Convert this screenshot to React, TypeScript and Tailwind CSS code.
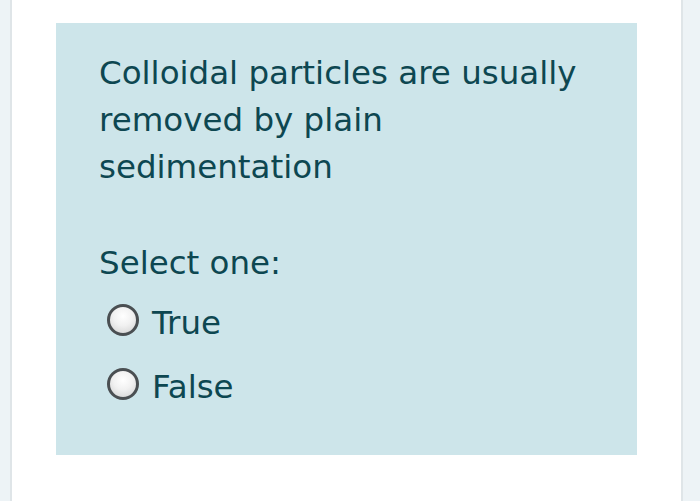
import React from "react";

function Radio({ label }: { label: string }) {
  return (
    <div className="flex items-center gap-[13px] h-[64px]">
      <span className="w-[32px] h-[32px] rounded-full border-[3px] border-[#4a4f52] bg-[radial-gradient(circle_at_50%_35%,#ffffff_0%,#f1f1f1_45%,#cfcfcf_100%)] shrink-0 -mt-[6px]" />
      <span className="text-[32.5px] leading-none text-[#0d4751]">{label}</span>
    </div>
  );
}

export default function App() {
  return (
    <div
      className="w-[700px] h-[501px] flex bg-white overflow-hidden"
      style={{ fontFamily: '"DejaVu Sans", "Liberation Sans", sans-serif' }}
    >
      <div className="w-[10px] bg-[#edf3f6]" />
      <div className="w-[2px] bg-[#dfe5e8]" />
      <div className="flex-1 bg-white pl-[44px] pr-[44px] pt-[23px]">
        <div className="bg-[#cde5ea] h-[432px] pl-[43px] pt-[27px] text-[#0d4751]">
          <p className="text-[32.5px] leading-[47px] w-[500px]">
            Colloidal particles are usually removed by plain sedimentation
          </p>
          <p className="text-[32.5px] leading-[47px] mt-[49px]">Select one:</p>
          <div className="mt-[4px] pl-[8px] flex flex-col">
            <Radio label="True" />
            <Radio label="False" />
          </div>
        </div>
      </div>
      <div className="w-[2px] bg-[#dfe5e8]" />
      <div className="w-[17px] bg-[#edf3f6]" />
    </div>
  );
}
